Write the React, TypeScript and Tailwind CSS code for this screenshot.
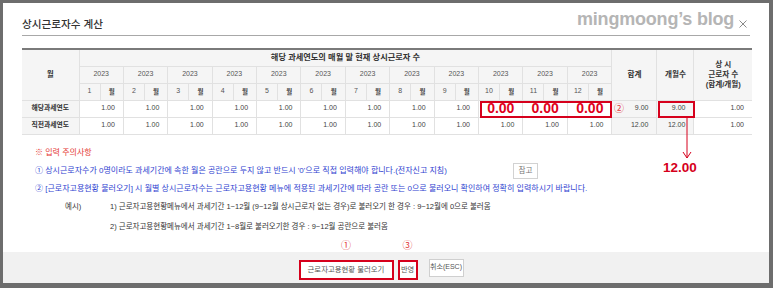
import React from "react";

const months = [1, 2, 3, 4, 5, 6, 7, 8, 9, 10, 11, 12];

// header / label cells
const th = "p-0 h-[17px] border-b border-r border-[#e1e1e1] bg-[#f5f5f5] text-center align-middle";
const td = "p-0 h-[17px] border-b border-r border-[#e1e1e1] text-right align-middle pr-[8px]";

export default function App() {
  return (
    <div className="w-[773px] h-[288px] overflow-hidden bg-[#6d6d6d] pt-[3px] pl-[3px] font-['Liberation_Sans','Noto_Sans_CJK_KR',sans-serif]">
      <div className="relative w-[766px] h-[280px] bg-white flex flex-col">
        {/* watermark */}
        <span className="absolute left-[574px] top-[6px] text-[18px] leading-[20px] font-bold text-[#b5b5b5] tracking-[-0.2px]">
          mingmoong’s blog
        </span>

        {/* title */}
        <div className="mx-[19px] pt-[14px] pb-[4px] border-b border-[#a8a8a8] flex items-center justify-between">
          <h2 className="text-[10.6px] leading-[14px] text-[#333] font-medium">상시근로자수 계산</h2>
          <svg width="8" height="8" viewBox="0 0 8 8" className="mr-[3px]">
            <path d="M0.5 0.5 L7.5 7.5 M7.5 0.5 L0.5 7.5" stroke="#8a8a8a" strokeWidth="1" fill="none" />
          </svg>
        </div>

        {/* table */}
        <div className="relative mx-[19px] mt-[12px]">
          <table className="w-[730px] table-fixed border-collapse border-t-2 border-t-[#7a7a7a] text-[7px] text-[#444]">
            <colgroup>
              <col className="w-[57px]" />
              {months.map((m) => (
                <React.Fragment key={m}>
                  <col className="w-[21px]" />
                  <col className="w-[23.4px]" />
                </React.Fragment>
              ))}
              <col className="w-[45px]" />
              <col className="w-[37px]" />
              <col />
            </colgroup>
            <thead>
              <tr>
                <th rowSpan={3} className={th + " font-bold text-[7.6px] text-[#333]"}>월</th>
                <th colSpan={24} className={th + " font-bold text-[8.2px] text-[#333]"}>
                  해당 과세연도의 매월 말 현재 상시근로자 수
                </th>
                <th rowSpan={3} className={th + " font-bold text-[7.6px] text-[#333]"}>합계</th>
                <th rowSpan={3} className={th + " font-bold text-[7.6px] text-[#333]"}>개월수</th>
                <th rowSpan={3} className={th + " border-r-0 font-bold text-[7.6px] leading-[10px] text-[#333]"}>
                  상 시
                  <br />
                  근로자 수
                  <br />
                  (합계/개월)
                </th>
              </tr>
              <tr>
                {months.map((m) => (
                  <th key={m} colSpan={2} className={th + " font-normal text-[#555]"}>
                    2023
                  </th>
                ))}
              </tr>
              <tr>
                {months.map((m) => (
                  <React.Fragment key={m}>
                    <th className={th + " font-normal text-[#555]"}>{m}</th>
                    <th className={th + " font-bold text-[6.5px] text-[#444]"}>월</th>
                  </React.Fragment>
                ))}
              </tr>
            </thead>
            <tbody>
              <tr>
                <td className={th + " font-bold text-[6.8px] text-[#333]"}>해당과세연도</td>
                {months.map((m) => (
                  <td key={m} colSpan={2} className={m >= 10 ? td + " pr-[4px]" : td}>
                    {m >= 10 ? (
                      <span className="text-[14px] leading-none font-bold text-[#e0001b]">0.00</span>
                    ) : (
                      "1.00"
                    )}
                  </td>
                ))}
                <td className={td + " bg-[#f5f5f5] pr-[6px]"}>9.00</td>
                <td className={td + " bg-[#f5f5f5] pr-[6px]"}>9.00</td>
                <td className={td + " border-r-0 pr-[6px]"}>1.00</td>
              </tr>
              <tr>
                <td className={th + " font-bold text-[6.8px] text-[#333]"}>직전과세연도</td>
                {months.map((m) => (
                  <td key={m} colSpan={2} className={td}>
                    1.00
                  </td>
                ))}
                <td className={td + " bg-[#f5f5f5] pr-[6px]"}>12.00</td>
                <td className={td + " bg-[#f5f5f5] pr-[6px]"}>12.00</td>
                <td className={td + " border-r-0 pr-[6px]"}>1.00</td>
              </tr>
            </tbody>
          </table>

          {/* annotations */}
          <div className="absolute left-[458px] top-[53px] w-[132px] h-[17px] border-2 border-[#d6001c]" />
          <span className="absolute left-[592px] top-[55px] text-[10px] leading-[12px] text-[#e23a3a]">②</span>
          <div className="absolute left-[636px] top-[53px] w-[37px] h-[17px] border-2 border-[#d6001c]" />
          <svg className="absolute left-[660px] top-[70px]" width="10" height="42" viewBox="0 0 10 42">
            <path d="M5 0 V40 M1 34 L5 40 L9 34" stroke="#d6001c" strokeWidth="1" fill="none" />
          </svg>
          <span className="absolute left-[641px] top-[113px] text-[13.5px] leading-[14px] font-bold text-[#d6001c]">
            12.00
          </span>
        </div>

        {/* notes */}
        <div className="ml-[32px] mt-[9px] text-[8px]">
          <div className="h-[18px] flex items-center text-[#e53935]">※ 입력 주의사항</div>
          <div className="h-[18px] flex items-center text-[#2f3fd0]">
            <span>① 상시근로자수가 0명이라도 과세기간에 속한 월은 공란으로 두지 않고 반드시 '0'으로 직접 입력해야 합니다.(전자신고 지침)</span>
            <button className="ml-[66px] w-[25px] h-[16px] border border-[#d2d2d2] bg-white text-[#777] text-[7.6px]">
              참고
            </button>
          </div>
          <div className="h-[18px] flex items-center text-[#2f3fd0]">
            ② [근로자고용현황 불러오기] 시 월별 상시근로자수는 근로자고용현황 메뉴에 적용된 과세기간에 따라 공란 또는 0으로 불러오니 확인하여 정확히 입력하시기 바랍니다.
          </div>
          <div className="h-[18px] flex items-center text-[#333] text-[7.5px]">
            <span className="ml-[30px] w-[45px]">예시)</span>
            <span>1) 근로자고용현황메뉴에서 과세기간 1~12월 (9~12월 상시근로자 없는 경우)로 불러오기 한 경우 : 9~12월에 0으로 불러옴</span>
          </div>
          <div className="mt-[2px] h-[18px] flex items-center pl-[75px] text-[#333] text-[7.5px]">
            2) 근로자고용현황메뉴에서 과세기간 1~8월로 불러오기한 경우 : 9~12월 공란으로 불러옴
          </div>
        </div>

        {/* footer */}
        <div className="mt-auto h-[31px] bg-[#f1f1f1] flex items-center justify-center pr-[10px]">
          <div className="relative">
            <span className="absolute left-1/2 -translate-x-1/2 -top-[15px] text-[10px] leading-[12px] text-[#e23a3a]">①</span>
            <button className="w-[95px] h-[20px] border-2 border-[#d6001c] bg-white text-[7.4px] text-[#555] whitespace-nowrap">
              근로자고용현황 불러오기
            </button>
          </div>
          <div className="relative ml-[4px]">
            <span className="absolute left-1/2 -translate-x-1/2 -top-[15px] text-[10px] leading-[12px] text-[#e23a3a]">③</span>
            <button className="w-[20px] h-[20px] border-2 border-[#d6001c] bg-white text-[7.2px] text-[#555] whitespace-nowrap">
              반영
            </button>
          </div>
          <button className="ml-[11px] w-[35px] h-[18px] px-0 border border-[#cfcfcf] bg-white text-[7px] text-[#555] whitespace-nowrap">
            취소(ESC)
          </button>
        </div>
      </div>
    </div>
  );
}
